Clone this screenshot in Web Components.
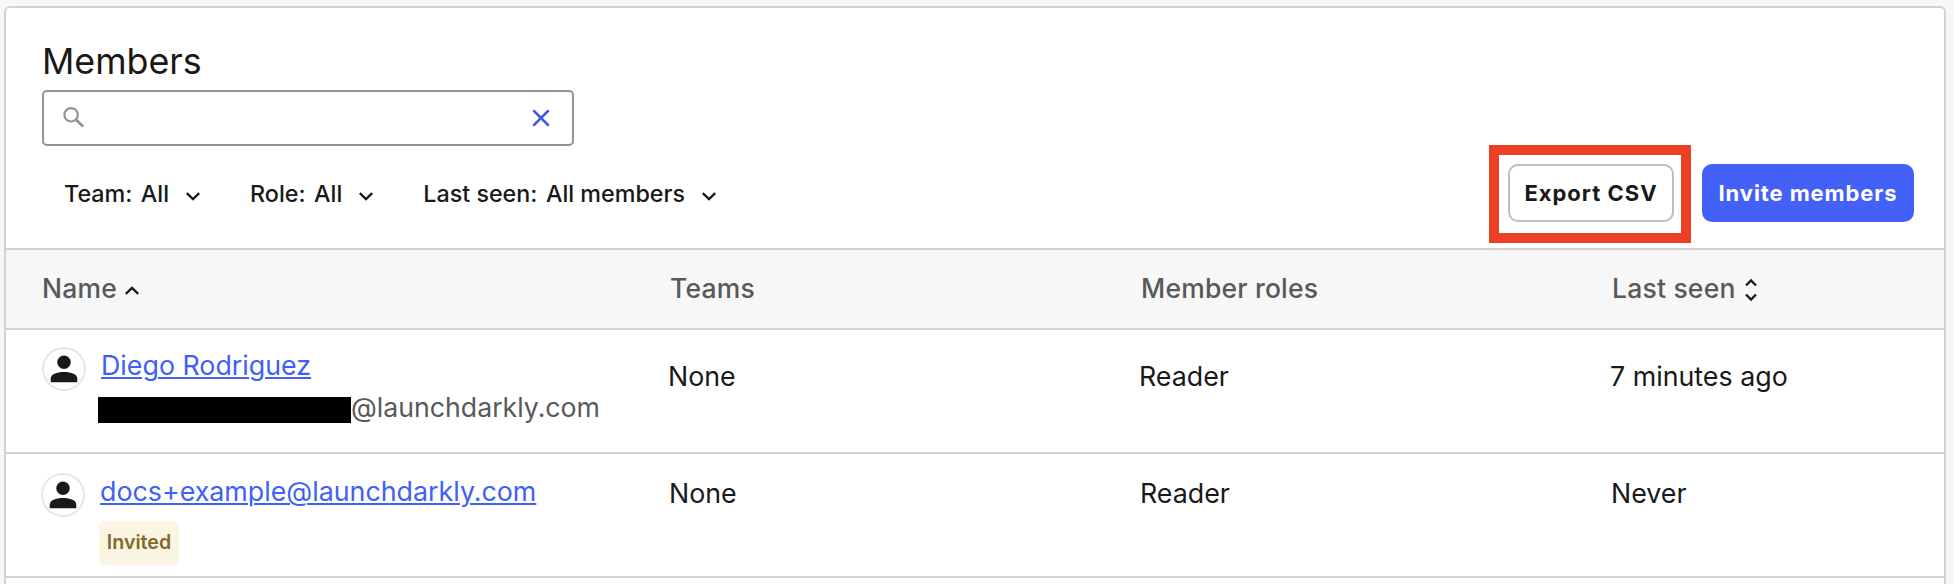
<!DOCTYPE html>
<html lang="en">
<head>
<meta charset="utf-8">
<title>Members</title>
<style>
html,body{margin:0;height:584px;overflow:hidden;background:#f7f7f7}
body{font-family:Inter,"Liberation Sans",sans-serif;color:#191919;box-sizing:border-box;padding:6px 8px 0 4px}
</style>
</head>
<body>
<members-card></members-card>
<script>
const define=(name,html)=>customElements.define(name,class extends HTMLElement{
  constructor(){super();this.attachShadow({mode:'open'}).innerHTML=html;}
});

define('chevron-icon',`<style>:host{display:block;width:14px;height:9px}svg{display:block;overflow:visible}</style>
<svg width="14" height="9" viewBox="0 0 14 9" fill="none" stroke="#191919" stroke-width="2.3"><path d="M.8 1.200 7 7.200 13.200 1.200"/></svg>`);

define('filter-menu',`<style>:host{display:flex;align-items:center;font-size:23.3px;line-height:30px;font-weight:500;white-space:nowrap}
.v{margin-left:8.500px}chevron-icon{margin:4px 0 0 17px}</style>
<slot name="label"></slot><span class="v"><slot></slot></span><chevron-icon></chevron-icon>`);

define('action-button',`<style>:host{display:flex;box-sizing:border-box;height:58px;align-items:center;justify-content:center;border:2px solid #bdbdbd;border-radius:10px;background:#fff;font-size:22px;font-weight:700;letter-spacing:1px;white-space:nowrap}
:host([primary]){background:#4361f7;border-color:#4361f7;color:#fff;letter-spacing:.9px}</style><slot></slot>`);

define('search-field',`<style>:host{display:flex;box-sizing:border-box;width:532px;height:56px;border:2px solid #939398;border-radius:5px;align-items:center;justify-content:space-between;padding:0 22px 0 19px;background:#fff}svg{display:block;overflow:visible}</style>
<svg width="22" height="22" viewBox="0 0 22 22" fill="none" stroke="#939398"><circle cx="8.1" cy="7.800" r="6.700" stroke-width="2.2"/><path d="M12.800 12.600 20.100 19.500" stroke-width="2.8"/></svg>
<svg width="18" height="18" viewBox="0 0 18 18" fill="none" stroke="#405bd8" stroke-width="2.500" stroke-linecap="round"><path d="M2 2 16 16M16 2 2 16"/></svg>`);

define('member-avatar',`<style>:host{display:block;width:44px;height:44px}svg{display:block}</style>
<svg width="44" height="44" viewBox="0 0 44 44"><circle cx="22" cy="22" r="21" fill="#fff" stroke="#e6e6e6" stroke-width="2"/><circle cx="22" cy="15.300" r="6.700" fill="#191919"/><path d="M8.700 35.200V31.600c0-4.500 6-6.700 13.300-6.700s13.300 2.200 13.300 6.700v3.600z" fill="#191919"/></svg>`);

define('status-badge',`<style>:host{display:flex;box-sizing:border-box;width:80px;height:44px;border-radius:5px;background:#fbf5e3;color:#806a2c;font-size:19.600px;font-weight:600;align-items:center;justify-content:center;padding-bottom:2px}</style><slot></slot>`);

define('table-row',`<style>:host{display:grid;grid-template-columns:628px 471px 471px 1fr;box-sizing:border-box;height:124px;border-bottom:2px solid #d3d3d3;background:#fff;font-size:26.800px;line-height:36px;padding-left:var(--inset,36px)}
:host([head]){height:80px;background:#f7f7f7;color:#58595b;font-size:26.500px}
.c{padding-top:var(--cell-top,0);margin-left:var(--cell-shift,0)}</style>
<slot name="who"></slot><div class="c"><slot name="teams"></slot></div><div class="c"><slot name="roles"></slot></div><div class="c"><slot name="seen"></slot></div>`);

define('member-identity',`<style>:host{display:grid;grid-template-columns:44px 1fr;column-gap:15px;align-items:start}
.a{padding-top:var(--avatar-top)}.t{padding-top:var(--name-top)}.n{color:#405ff7;text-decoration:underline;text-decoration-thickness:2px;text-underline-offset:2px;line-height:34px;width:max-content}</style>
<div class="a"><member-avatar></member-avatar></div><div class="t"><div class="n"><slot></slot></div><slot name="detail"></slot></div>`);

define('redacted-mail',`<style>:host{display:flex;color:#58595b;font-size:26.700px;line-height:34px;margin:8px 0 0 -3px;align-items:flex-start}i{display:block;width:253px;height:26px;background:#000;margin-top:7px}</style><i></i><slot></slot>`);

define('members-card',`<style>
:host{display:block;box-sizing:border-box;height:578px;border:2px solid #d3d3d3;border-bottom:0;border-radius:6px 6px 0 0;background:#fff;overflow:hidden}
header{box-sizing:border-box;height:242px;border-bottom:2px solid #d3d3d3;padding:32px 30px 0 36px}
h1{margin:0;font-size:35.800px;line-height:42px;font-weight:400;height:50px}
.bar{display:flex;justify-content:space-between;align-items:flex-start}
.filters{display:flex;padding:33px 0 0 22px;gap:50px}
.actions{display:flex;gap:11px;align-items:center}
.mark{border:10px solid #eb4026;padding:9px 7px 11px 9px;box-sizing:border-box;width:202px;height:98px;margin-top:-1px}
.invite{width:212px;margin-top:-3px}
.h{display:flex;align-items:center;gap:8px;font-weight:500;letter-spacing:.2px}
.up{transform:rotate(180deg);margin-top:5px}
.sort{display:block;margin:4px 0 0 1px;overflow:visible}
status-badge{margin-top:13px;margin-left:-1px}
</style>
<header><h1>Members</h1><search-field></search-field>
<div class="bar"><div class="filters">
<filter-menu><span slot="label">Team:</span>All</filter-menu><filter-menu><span slot="label">Role:</span>All</filter-menu><filter-menu><span slot="label">Last seen:</span>All members</filter-menu></div>
<div class="actions"><div class="mark"><action-button>Export CSV</action-button></div><action-button class="invite" primary>Invite members</action-button></div></div></header>
<table-row head style="--cell-top:20px"><div slot="who" class="h" style="height:76px">Name<chevron-icon class="up"></chevron-icon></div><span slot="teams" class="h">Teams</span><span slot="roles" class="h">Member roles</span><span slot="seen" class="h">Last seen<svg class="sort" width="12" height="22" viewBox="0 0 12 22" fill="none" stroke="#191919" stroke-width="2.3"><path d="M1 6.500 6 1.500 11 6.500M1 15.500 6 20.500 11 15.500"/></svg></span></table-row>
<table-row style="--cell-top:28px;--cell-shift:-2px"><member-identity slot="who" style="--avatar-top:17px;--name-top:18px">Diego Rodriguez<redacted-mail slot="detail">@launchdarkly.com</redacted-mail></member-identity><span slot="teams">None</span><span slot="roles">Reader</span><span slot="seen">7 minutes ago</span></table-row>
<table-row style="--cell-top:21px;--inset:35px"><member-identity slot="who" style="--avatar-top:19px;--name-top:20px">docs+example@launchdarkly.com<status-badge slot="detail">Invited</status-badge></member-identity><span slot="teams">None</span><span slot="roles">Reader</span><span slot="seen">Never</span></table-row>`);
</script>
</body>
</html>
